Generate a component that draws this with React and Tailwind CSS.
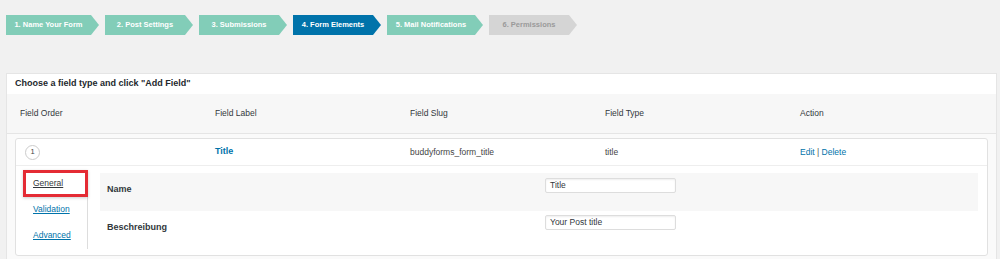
import React from 'react';

const steps = [
  { label: '1. Name Your Form', w: 'w-[93px]', tone: 'done' },
  { label: '2. Post Settings', w: 'w-[88px]', tone: 'done' },
  { label: '3. Submissions', w: 'w-[88px]', tone: 'done' },
  { label: '4. Form Elements', w: 'w-[88px]', tone: 'active' },
  { label: '5. Mail Notifications', w: 'w-[96px]', tone: 'done' },
  { label: '6. Permissions', w: 'w-[88px]', tone: 'todo' },
];

const toneClass = {
  done: 'bg-[#82cdb8] text-white',
  active: 'bg-[#0073aa] text-white',
  todo: 'bg-[#d5d5d5] text-[#9a9a9a]',
};

const Step = ({ label, w, tone }) => (
  <div
    className={`${w} ${toneClass[tone]} h-[20px] pr-[8px] flex items-center justify-center text-[7.5px] font-bold whitespace-nowrap [clip-path:polygon(0_0,calc(100%_-_8px)_0,100%_50%,calc(100%_-_8px)_100%,0_100%)]`}
  >
    {label}
  </div>
);

const cols = 'grid grid-cols-[195px_195px_195px_195px_1fr] items-center';

const App = () => {
  return (
    <div className="w-[1000px] h-[259px] overflow-hidden bg-[#f1f1f1] font-['Liberation_Sans',Arial,sans-serif] text-[#444]">
      <div className="flex gap-[6px] pl-[6px] pt-[15px]">
        {steps.map((s) => (
          <Step key={s.label} {...s} />
        ))}
      </div>

      <div className="mt-[38px] ml-[6px] w-[991px] h-[200px] border border-[#e5e5e5] bg-[#fafafa]">
        <div className="h-[20px] bg-white pl-[8px] flex items-center text-[9px] font-bold text-[#23282d]">
          Choose a field type and click "Add Field"
        </div>

        <div className={`${cols} h-[40px] pl-[13px] bg-[#f7f7f7] border-b border-[#e5e5e5] text-[8.5px] text-[#32373c]`}>
          <span>Field Order</span>
          <span>Field Label</span>
          <span>Field Slug</span>
          <span>Field Type</span>
          <span>Action</span>
        </div>

        <div className="pt-[4px] px-[8px]">
          <div className="border border-[#e1e1e1] rounded-[3px] bg-white h-[118px]">
            <div className={`${cols} h-[27px] pl-[4px] border-b border-[#eeeeee] text-[8.5px]`}>
              <span>
                <span className="ml-[5px] w-[15px] h-[15px] rounded-full border border-[#cccccc] flex items-center justify-center text-[7.5px] text-[#444]">
                  1
                </span>
              </span>
              <span className="text-[9px] font-bold text-[#0073aa]">Title</span>
              <span>buddyforms_form_title</span>
              <span>title</span>
              <span className="text-[#0073aa]">
                Edit <span className="text-[#555]">|</span> Delete
              </span>
            </div>

            <div className="flex pt-[4px] pl-[7px] pr-[9px]">
              <div className="w-[65px] h-[79px] border-r border-[#dddddd] flex flex-col text-[8.5px]">
                <div className="h-[27px] -mr-px border-[3px] border-[#e42b34] bg-white shadow-[0_1px_3px_rgba(0,0,0,0.2)] flex items-center pl-[7px]">
                  <span className="underline text-[#32373c]">General</span>
                </div>
                <div className="h-[25px] flex items-center pl-[10px]">
                  <span className="underline text-[#0073aa]">Validation</span>
                </div>
                <div className="h-[26px] flex items-center pl-[10px]">
                  <span className="underline text-[#0073aa]">Advanced</span>
                </div>
              </div>

              <div className="ml-[12px] flex-1 mt-[3px]">
                <div className="h-[38px] bg-[#f7f7f7] flex">
                  <div className="w-[445px] pl-[7px] pt-[11px] leading-[11px] text-[9px] font-bold text-[#32373c]">
                    Name
                  </div>
                  <div className="pt-[5px]">
                    <div className="w-[131px] h-[15px] border border-[#dddddd] rounded-[2px] bg-white shadow-[inset_0_1px_2px_rgba(0,0,0,0.07)] pl-[4px] flex items-center text-[8.5px] text-[#32373c]">
                      Title
                    </div>
                  </div>
                </div>
                <div className="h-[38px] flex">
                  <div className="w-[445px] pl-[7px] pt-[11px] leading-[11px] text-[9px] font-bold text-[#32373c]">
                    Beschreibung
                  </div>
                  <div className="pt-[4px]">
                    <div className="w-[131px] h-[15px] border border-[#dddddd] rounded-[2px] bg-white shadow-[inset_0_1px_2px_rgba(0,0,0,0.07)] pl-[4px] flex items-center text-[8.5px] text-[#32373c]">
                      Your Post title
                    </div>
                  </div>
                </div>
              </div>
            </div>
          </div>
        </div>
      </div>
    </div>
  );
};

export default App;
